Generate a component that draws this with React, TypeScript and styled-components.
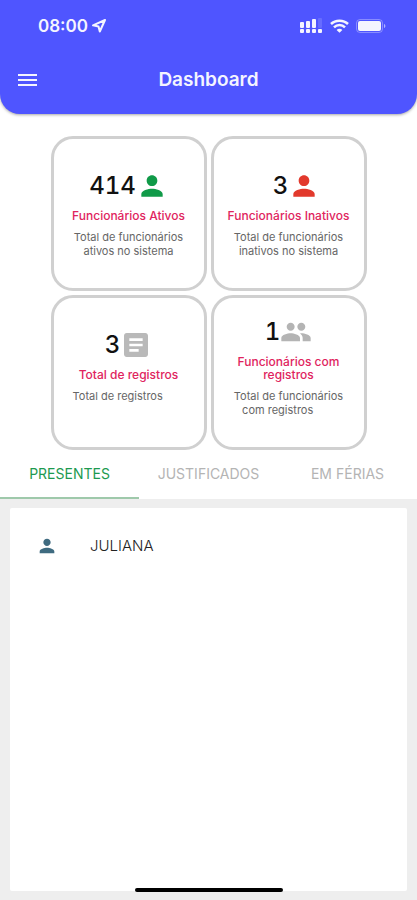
import React, { useState } from "react";
import styled, { createGlobalStyle } from "styled-components";

const GlobalStyle = createGlobalStyle`
  *, *::before, *::after { box-sizing: border-box; }
  body {
    margin: 0;
    background: #ffffff;
    font-family: Inter, "Liberation Sans", sans-serif;
    color: #111111;
  }
`;

const Screen = styled.div`
  position: relative;
  display: flex;
  flex-direction: column;
  min-height: 100vh;
`;

const Header = styled.header`
  padding: 12px 18px 16px;
  background: #4f55ff;
  color: #f4f4ff;
  border-radius: 0 0 20px 20px;
  box-shadow: 0 1px 3px rgba(0, 0, 0, 0.35);
`;

const StatusBar = styled.div`
  display: flex;
  align-items: center;
  justify-content: space-between;
  height: 28px;
  padding: 0 13px 0 20px;
`;

const Clock = styled.div`
  display: flex;
  align-items: center;
  gap: 3px;
  font-size: 17px;
  line-height: 20px;
  font-weight: 600;
`;

const Indicators = styled.div`
  display: flex;
  align-items: center;
  gap: 7px;
`;

const TitleBar = styled.div`
  display: grid;
  grid-template-columns: 20px 1fr 20px;
  align-items: center;
  height: 36px;
  margin-top: 22px;
`;

const MenuButton = styled.button`
  display: flex;
  padding: 0;
  border: 0;
  background: none;
  color: inherit;
  cursor: pointer;
`;

const Title = styled.h1`
  margin: 0;
  text-align: center;
  font-size: 19px;
  line-height: 24px;
  font-weight: 600;
`;

const Cards = styled.section`
  display: grid;
  grid-template-columns: repeat(2, 156px);
  justify-content: center;
  gap: 4px;
  padding: 22px 0 0;
`;

const Card = styled.article`
  display: flex;
  flex-direction: column;
  align-items: center;
  justify-content: flex-end;
  min-height: 155px;
  padding: 0 12px 30px;
  border: 3px solid #d0d0d0;
  border-radius: 22px;
  background: #ffffff;
  text-align: center;
`;

const Figure = styled.div<{ $indent?: boolean }>`
  display: flex;
  align-items: center;
  height: 32px;
  padding-left: ${(p) => (p.$indent ? "16px" : "0")};
  font-size: 24px;
  line-height: 32px;
  font-weight: 500;
  font-variant-numeric: tabular-nums;
`;

const CardLabel = styled.h2`
  margin: 7px 0 8px;
  font-size: 12px;
  line-height: 13px;
  font-weight: 500;
  color: #e0245e;
`;

const CardText = styled.p`
  margin: 0;
  min-height: 28px;
  font-size: 11px;
  line-height: 14px;
  color: #666666;
  white-space: pre;
`;

const Tabs = styled.div`
  display: grid;
  grid-template-columns: repeat(3, 1fr);
`;

const Tab = styled.button<{ $active: boolean }>`
  height: 49px;
  padding: 0;
  border: 0;
  border-bottom: 2px solid ${(p) => (p.$active ? "#9fc9ab" : "transparent")};
  background: none;
  font-family: inherit;
  font-size: 14px;
  line-height: 16px;
  color: ${(p) => (p.$active ? "#1d9a50" : "#b4b4b4")};
  cursor: pointer;
`;

const Panel = styled.main`
  display: flex;
  flex: 1;
  padding: 9px 10px;
  background: #eeeeee;
`;

const List = styled.ul`
  flex: 1;
  margin: 0;
  padding: 20px 26px;
  border-radius: 2px;
  background: #ffffff;
  list-style: none;
`;

const Person = styled.li`
  display: flex;
  align-items: center;
  gap: 32px;
  height: 36px;
  font-size: 15px;
  line-height: 20px;
  font-weight: 300;
  color: #222222;
`;

const HomeBar = styled.div`
  position: absolute;
  bottom: 8px;
  left: 50%;
  width: 148px;
  height: 4px;
  margin-left: -74px;
  border-radius: 2px;
  background: #000000;
`;

const PERSON =
  "M12 12c2.21 0 4-1.79 4-4s-1.79-4-4-4-4 1.79-4 4 1.79 4 4 4zm0 2c-2.67 0-8 1.34-8 4v2h16v-2c0-2.66-5.33-4-8-4z";
const ARTICLE =
  "M19 3H5c-1.1 0-2 .9-2 2v14c0 1.1.9 2 2 2h14c1.1 0 2-.9 2-2V5c0-1.1-.9-2-2-2zm-5 14H7v-2h7v2zm3-4H7v-2h10v2zm0-4H7V7h10v2z";
const PEOPLE =
  "M16 11c1.66 0 2.99-1.34 2.99-3S17.66 5 16 5s-3 1.34-3 3 1.34 3 3 3zm-8 0c1.66 0 2.99-1.34 2.99-3S9.66 5 8 5 5 6.34 5 8s1.34 3 3 3zm0 2c-2.33 0-7 1.17-7 3.5V19h14v-2.5C15 14.17 10.33 13 8 13zm8 0c-.29 0-.62.02-.97.05C16.19 13.89 17 15.02 17 16.5V19h6v-2.5c0-2.33-4.67-3.5-7-3.5z";

function Glyph({ d, color, size = 32 }: { d: string; color: string; size?: number }) {
  return (
    <svg width={size} height={size} viewBox="0 0 24 24" fill={color} aria-hidden="true">
      <path d={d} />
    </svg>
  );
}

function LocationIcon() {
  return (
    <svg width="16" height="16" viewBox="0 0 16 16" fill="none" stroke="currentColor" strokeWidth="2" strokeLinejoin="round" aria-hidden="true">
      <path d="M14 2 L2 7.300 L7.500 8.500 L8.800 13.500 Z" />
    </svg>
  );
}

function SignalIcon() {
  return (
    <svg width="23" height="16" viewBox="0 0 23 16" fill="currentColor" aria-hidden="true">
      <rect x="0" y="4" width="4" height="6" rx="1" />
      <rect x="6" y="3" width="4" height="7" rx="1" />
      <rect x="12" y="1" width="4" height="9" rx="1" />
      <rect x="18" y="0" width="4" height="10" rx="1" opacity="0.15" />
      <rect x="0" y="11" width="4" height="4" rx="1" />
      <rect x="6" y="11" width="4" height="4" rx="1" />
      <rect x="12" y="11" width="4" height="4" rx="1" />
      <rect x="18" y="11" width="4" height="4" rx="1" />
    </svg>
  );
}

function WifiIcon() {
  return (
    <svg width="19" height="14" viewBox="0 0 19 14" fill="none" stroke="currentColor" strokeWidth="2.500" aria-hidden="true">
      <path d="M1 5 C5.500 0.500 13.500 0.500 18 5" />
      <path d="M4 8.300 C7 5.300 12 5.300 15 8.300" />
      <path d="M9.500 13.800 L6.600 10.900 C8.200 9.300 10.800 9.300 12.400 10.900 Z" fill="currentColor" stroke="none" />
    </svg>
  );
}

function BatteryIcon() {
  return (
    <svg width="30" height="14" viewBox="0 0 30 14" fill="none" aria-hidden="true">
      <rect x="0.500" y="0.500" width="26" height="13" rx="3.500" stroke="currentColor" opacity="0.35" />
      <rect x="2" y="2" width="23" height="10" rx="2" fill="currentColor" />
      <path d="M28 5 C29.800 5.500 29.800 8.500 28 9 Z" fill="currentColor" opacity="0.6" />
    </svg>
  );
}

const stats = [
  { value: 414, label: "Funcionários Ativos", text: "Total de funcionários\nativos no sistema", icon: PERSON, color: "#109a48" },
  { value: 3, label: "Funcionários Inativos", text: "Total de funcionários\ninativos no sistema", icon: PERSON, color: "#e2392c", indent: true },
  { value: 3, label: "Total de registros", text: "Total de registros\u00a0\u00a0\u00a0\u00a0\u00a0\u00a0\u00a0", icon: ARTICLE, color: "#b9b9b9" },
  { value: 1, label: "Funcionários com registros", text: "Total de funcionários\ncom registros\u00a0\u00a0\u00a0\u00a0\u00a0\u00a0\u00a0", icon: PEOPLE, color: "#b4b4b4" },
];

const tabs = ["PRESENTES", "JUSTIFICADOS", "EM FÉRIAS"];
const people: Record<string, string[]> = { PRESENTES: ["JULIANA"] };

export default function App() {
  const [active, setActive] = useState(tabs[0]);
  return (
    <>
      <GlobalStyle />
      <Screen>
        <Header>
          <StatusBar>
            <Clock>
              08:00
              <LocationIcon />
            </Clock>
            <Indicators>
              <SignalIcon />
              <WifiIcon />
              <BatteryIcon />
            </Indicators>
          </StatusBar>
          <TitleBar>
            <MenuButton type="button" aria-label="Menu">
              <svg width="20" height="14" viewBox="0 0 20 14" fill="currentColor" aria-hidden="true">
                <path d="M0 1h19v2H0zM0 6h19v2H0zM0 11h19v2H0z" />
              </svg>
            </MenuButton>
            <Title>Dashboard</Title>
          </TitleBar>
        </Header>
        <Cards>
          {stats.map((s) => (
            <Card key={s.label}>
              <Figure $indent={s.indent}>
                {s.value}
                <Glyph d={s.icon} color={s.color} />
              </Figure>
              <CardLabel>{s.label}</CardLabel>
              <CardText>{s.text}</CardText>
            </Card>
          ))}
        </Cards>
        <Tabs role="tablist">
          {tabs.map((t) => (
            <Tab key={t} type="button" role="tab" aria-selected={t === active} $active={t === active} onClick={() => setActive(t)}>
              {t}
            </Tab>
          ))}
        </Tabs>
        <Panel>
          <List>
            {(people[active] ?? []).map((name) => (
              <Person key={name}>
                <Glyph d={PERSON} color="#3f6b80" size={22} />
                {name}
              </Person>
            ))}
          </List>
        </Panel>
        <HomeBar />
      </Screen>
    </>
  );
}
